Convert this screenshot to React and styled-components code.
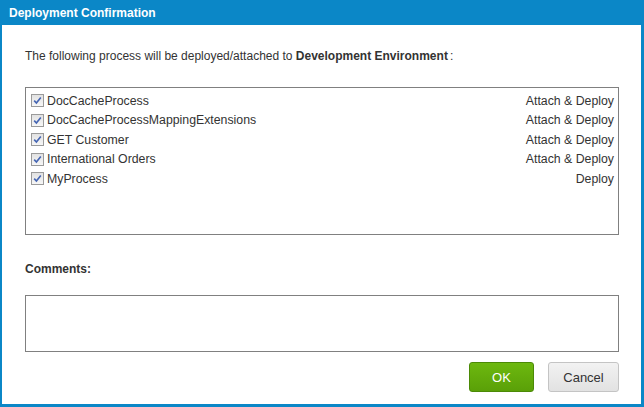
import React from "react";
import styled, { createGlobalStyle } from "styled-components";

const GlobalStyle = createGlobalStyle`
  html, body {
    margin: 0;
    padding: 0;
    background: #ffffff;
  }
  body {
    font-family: "Liberation Sans", Arial, sans-serif;
  }
`;

const processes = [
  { name: "DocCacheProcess", action: "Attach & Deploy" },
  { name: "DocCacheProcessMappingExtensions", action: "Attach & Deploy" },
  { name: "GET Customer", action: "Attach & Deploy" },
  { name: "International Orders", action: "Attach & Deploy" },
  { name: "MyProcess", action: "Deploy" },
];

export default function App() {
  return (
    <>
      <GlobalStyle />
      <Dialog>
        <TitleBar>Deployment Confirmation</TitleBar>
        <Body>
          <Intro>
            The following process will be deployed/attached to{" "}
            <strong>Development Environment</strong>:
          </Intro>
          <ProcessList>
            {processes.map((p) => (
              <Row key={p.name}>
                <Check />
                <Name>{p.name}</Name>
                <Action>{p.action}</Action>
              </Row>
            ))}
          </ProcessList>
          <Label>Comments:</Label>
          <Comments />
          <Footer>
            <Button primary>OK</Button>
            <Button>Cancel</Button>
          </Footer>
        </Body>
      </Dialog>
    </>
  );
}

function Check() {
  return (
    <CheckBox>
      <svg width="11" height="11" viewBox="0 0 11 11">
        <path d="M2.2 5.6 L4.4 8 L8.8 2.4" fill="none" stroke="#4565b3" strokeWidth="1.6" />
      </svg>
    </CheckBox>
  );
}

const Dialog = styled.div`
  width: 644px;
  height: 407px;
  box-sizing: border-box;
  border: solid #0b87c7;
  border-width: 0 3px 3px 2px;
  display: flex;
  flex-direction: column;
  color: #333333;
`;

const TitleBar = styled.div`
  height: 25px;
  margin: 0 -3px 0 -2px;
  background: #0b87c7;
  color: #ffffff;
  font-weight: bold;
  font-size: 12px;
  line-height: 27px;
  padding-left: 9px;
`;

const Body = styled.div`
  flex: 1;
  display: flex;
  flex-direction: column;
  padding: 0 22px 0 23px;
`;

const Intro = styled.div`
  font-size: 12px;
  margin-top: 23px;
  line-height: 16px;

  strong {
    margin-right: 2px;
  }
`;

const ProcessList = styled.div`
  margin-top: 23px;
  height: 143px;
  border: 1px solid #808080;
  padding: 3px 4px 0 5px;
`;

const Row = styled.div`
  display: flex;
  align-items: center;
  height: 19.5px;
  font-size: 12.3px;
`;

const CheckBox = styled.span`
  width: 11px;
  height: 11px;
  border: 1px solid #9a9a9a;
  background: linear-gradient(#e2e2e2, #f6f6f6);
  display: flex;
  margin-right: 3px;
`;

const Name = styled.span`
  flex: 1;
`;

const Action = styled.span``;

const Label = styled.div`
  font-size: 12px;
  font-weight: bold;
  margin-top: 27px;
`;

const Comments = styled.div`
  margin-top: 19px;
  height: 55px;
  border: 1px solid #808080;
`;

const Footer = styled.div`
  display: flex;
  justify-content: flex-end;
  gap: 14px;
  margin-top: 10px;
`;

const Button = styled.button`
  width: ${(p) => (p.primary ? "65px" : "71px")};
  height: 30px;
  border-radius: 3px;
  font-family: "Liberation Sans", Arial, sans-serif;
  font-size: 13px;
  border: 1px solid ${(p) => (p.primary ? "#4b8a06" : "#c4c4c4")};
  background: ${(p) =>
    p.primary
      ? "linear-gradient(#6db80f, #5aa008)"
      : "linear-gradient(#f2f2f2, #e2e2e2)"};
  color: ${(p) => (p.primary ? "#ffffff" : "#333333")};
  padding: 0;
`;
